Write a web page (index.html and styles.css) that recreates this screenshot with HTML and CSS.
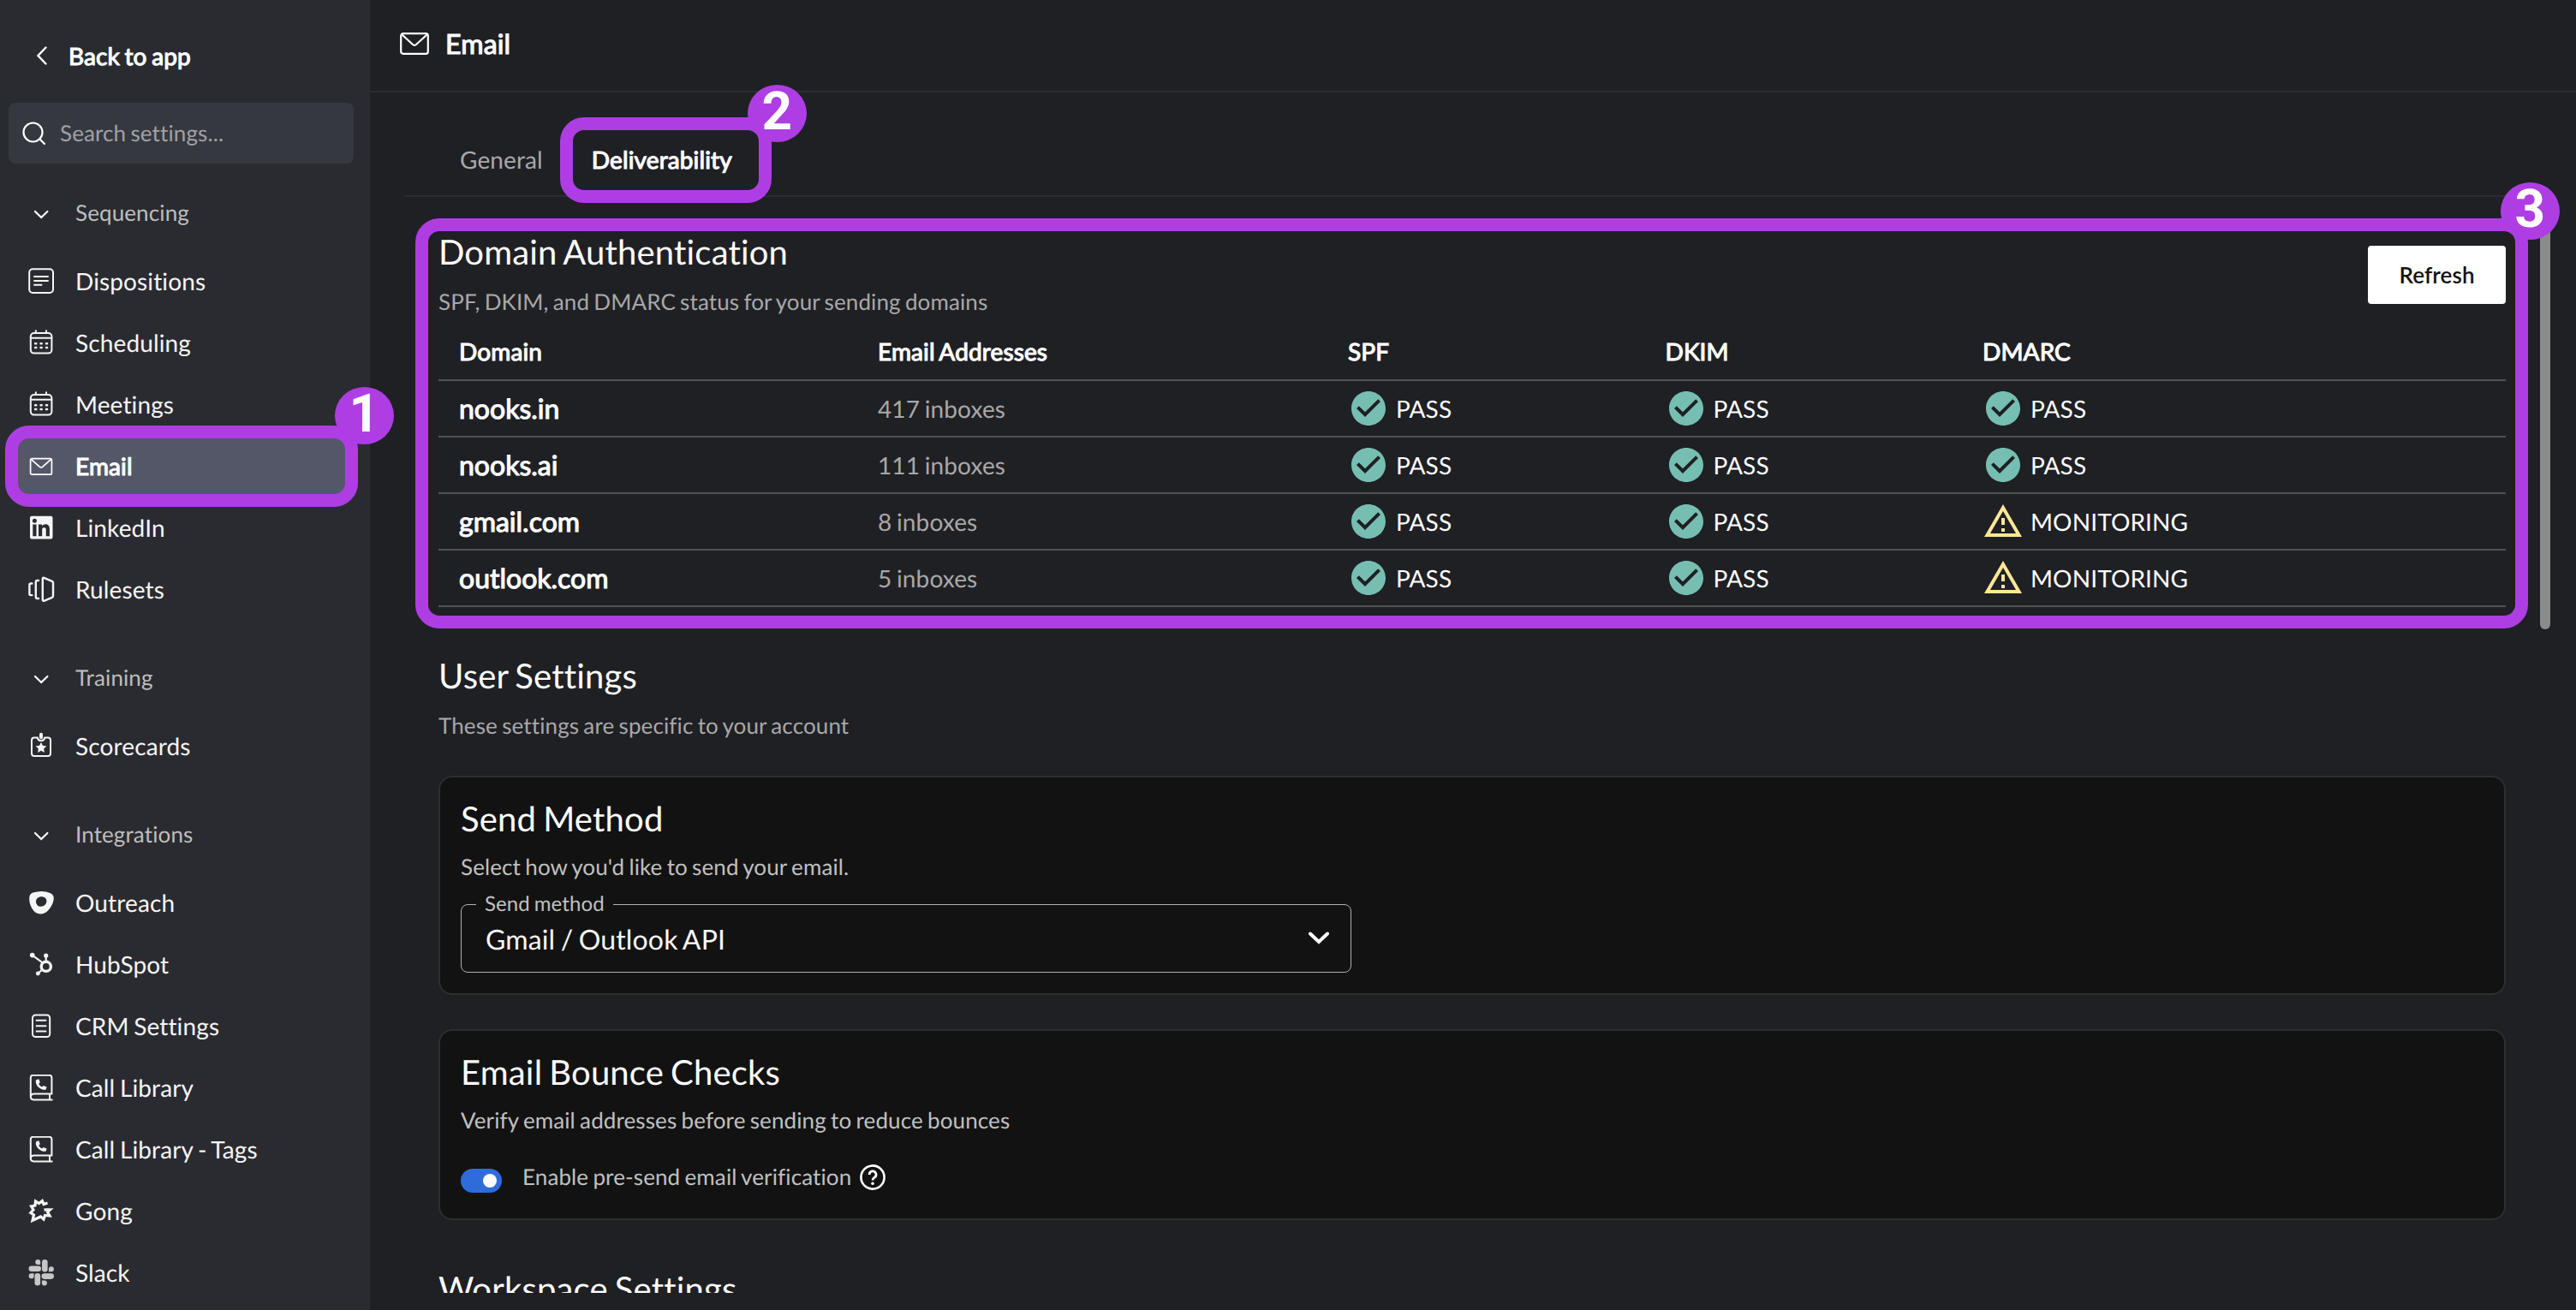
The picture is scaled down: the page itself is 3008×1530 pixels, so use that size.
FILE: index.html
```html
<!DOCTYPE html>
<html lang="en">
<head>
  <meta charset="UTF-8">
  <meta name="viewport" content="width=device-width, initial-scale=1.0">
  <title>Email - Settings</title>
  <link rel="stylesheet" href="styles.css">
</head>
<body>
  <!-- Shared icons -->
  <svg class="sprite" aria-hidden="true">
    <symbol id="chevron-down" viewBox="0 0 32 32">
      <path d="M9 14l7.2 7L23.4 14" fill="none" stroke="currentColor" stroke-width="2.2" stroke-linecap="round"/>
    </symbol>
    <symbol id="calendar" viewBox="0 0 32 32">
      <g fill="none" stroke="currentColor" stroke-width="2" stroke-linecap="round">
        <rect x="3.8" y="4" width="24.6" height="23.6" rx="4"/>
        <path d="M4 9.7h24M9.8 1.3V4M22 1.3V4"/>
        <path d="M9.2 16.3h1M15.6 16.3h1M22 16.3h1M9.2 21h1M15.6 21h1M22 21h1" stroke-width="2.6"/>
      </g>
    </symbol>
    <symbol id="mail" viewBox="0 0 32 32">
      <g fill="none" stroke="currentColor" stroke-width="1.7" stroke-linejoin="round">
        <rect x="3.6" y="6.6" width="24.8" height="18.6" rx="1.8"/>
        <path d="M4.6 7.6l9.6 8.6q1.8 1.5 3.6 0l9.6-8.6"/>
      </g>
    </symbol>
    <symbol id="call-book" viewBox="0 0 32 32">
      <g fill="none" stroke="currentColor" stroke-width="2">
        <path d="M3.8 26V3.5Q3.8.8 6.5.8h19.2q2.7 0 2.7 2.7v19H7.3q-3.5.2-3.5 3.5t3.5 3.5h22.2M26 22.5v7"/>
      </g>
      <path d="M10.2 6.2l3.1-1 1.5 4-1.6 1.5q1.1 2.7 3.8 3.8l1.6-1.6 4 1.5-1 3.1q-2 .8-4.7-.3-4.900-1.700-6.800-6.600-.7-2.700.1-4.400z" fill="currentColor"/>
    </symbol>
    <symbol id="check-circle" viewBox="0 0 24 24">
      <path fill="currentColor" d="M12 2C6.480 2 2 6.480 2 12s4.480 10 10 10 10-4.480 10-10S17.520 2 12 2zm-2 15-5-5 1.410-1.410L10 14.170l7.590-7.590L19 8l-9 9z"/>
    </symbol>
    <symbol id="warning" viewBox="0 0 24 24">
      <path fill="currentColor" d="M12 5.990L19.530 19H4.470L12 5.990M12 2L1 21h22L12 2zm1 14h-2v2h2v-2zm0-6h-2v4h2v-4z"/>
    </symbol>
  </svg>

  <div class="app">
    <aside class="sidebar">
      <a class="back" href="#">
        <svg class="back-icon" viewBox="0 0 12 22"><path d="M10.500 1.500L1.500 11l9 9.500" fill="none" stroke="currentColor" stroke-width="2.400" stroke-linecap="round"/></svg>
        <span>Back to app</span>
      </a>

      <div class="search">
        <svg class="search-icon" viewBox="0 0 28 28"><g fill="none" stroke="currentColor" stroke-width="2.200" stroke-linecap="round"><circle cx="12.500" cy="12.500" r="11"/><path d="M20.500 20.500l5.500 5.500"/></g></svg>
        <span>Search settings...</span>
      </div>

      <nav class="nav">
        <div class="nav-group">
          <div class="nav-heading"><svg class="nav-icon"><use href="#chevron-down"/></svg>Sequencing</div>
          <a class="nav-item" href="#">
            <svg class="nav-icon" viewBox="0 0 32 32"><g fill="none" stroke="currentColor" stroke-width="2" stroke-linecap="round"><rect x="2.200" y="1.200" width="27.800" height="27.800" rx="4"/><path d="M8 10h16M8 15h16M8 19.700h8.500"/></g></svg>
            Dispositions
          </a>
          <a class="nav-item" href="#"><svg class="nav-icon"><use href="#calendar"/></svg>Scheduling</a>
          <a class="nav-item" href="#"><svg class="nav-icon"><use href="#calendar"/></svg>Meetings</a>
          <a class="nav-item active" href="#">
            <svg class="nav-icon"><use href="#mail"/></svg>Email
            <span class="callout callout-nav"><b class="badge">1</b></span>
          </a>
          <a class="nav-item" href="#">
            <svg class="nav-icon" viewBox="0 0 32 32"><path fill="currentColor" fill-rule="evenodd" d="M5 1.700h22.500a2 2 0 0 1 2 2v22.800a2 2 0 0 1-2 2H5a2 2 0 0 1-2-2V3.700a2 2 0 0 1 2-2zM6.300 11.500v13.800h4.200V11.500zM8.400 4.800a2.500 2.500 0 1 0 0 5 2.500 2.500 0 0 0 0-5zM13 11.500v13.800h4.200v-7.500c0-3.600 4.500-3.900 4.500 0v7.500h4.200v-8.700c0-6.100-6.300-6.700-8.800-3.200v-1.900z"/></svg>
            LinkedIn
          </a>
          <a class="nav-item" href="#">
            <svg class="nav-icon" viewBox="0 0 32 32"><g fill="none" stroke="currentColor" stroke-width="2.400" stroke-linecap="round" stroke-linejoin="round"><path d="M5.400 8.500H3.800q-1.400 0-1.400 1.300v11q0 1.300 1.400 1.300h1.600M13 5h-1.500q-1.700 0-1.700 1.700v17.600q0 1.700 1.700 1.700H13M17.800 3q0-1.500 1.500-1.200l9.500 4q1.200.5 1.200 1.800v15.400q0 1.300-1.200 1.800l-9.500 4q-1.500.3-1.500-1.200z"/></g></svg>
            Rulesets
          </a>
        </div>

        <div class="nav-group">
          <div class="nav-heading"><svg class="nav-icon"><use href="#chevron-down"/></svg>Training</div>
          <a class="nav-item" href="#">
            <svg class="nav-icon" viewBox="0 0 32 32"><path d="M12.500 5.500H8q-3 0-3 3V24q0 3 3 3h16q3 0 3-3V8.500q0-3-3-3h-4.500" fill="none" stroke="currentColor" stroke-width="2"/><path d="M11.800 5.500q.6 3.600 4.200 3.600t4.200-3.600" fill="none" stroke="currentColor" stroke-width="2"/><rect x="14" y="-.2" width="4" height="7.500" rx="2" fill="currentColor"/><path d="M16 10.700l1.900 4.100 4.500.6-3.300 3 .9 4.500-4-2.200-4 2.200.9-4.500-3.300-3 4.500-.6z" fill="currentColor"/></svg>
            Scorecards
          </a>
        </div>

        <div class="nav-group">
          <div class="nav-heading"><svg class="nav-icon"><use href="#chevron-down"/></svg>Integrations</div>
          <a class="nav-item" href="#">
            <svg class="nav-icon" viewBox="0 0 32 32"><path fill="currentColor" fill-rule="evenodd" d="M14 2.200q7-.5 12.500 1.800 5 2 4.200 7.500-1 6.500-6 12.300-4 4.800-9.500 4.800-6 0-9.800-6.500Q2 16.500 2.200 9.800 2.400 5 6.500 3.500 10 2.400 14 2.200zM16.500 8.300c-3.800 0-6.500 2.400-6.500 5.600s2.500 5.900 5.800 5.900 6.600-2.600 6.600-6.200c0-3.200-2.600-5.300-5.900-5.300z"/></svg>
            Outreach
          </a>
          <a class="nav-item" href="#">
            <svg class="nav-icon" viewBox="0 0 32 32"><g fill="none" stroke="currentColor"><circle cx="21.800" cy="17.800" r="5.600" stroke-width="3.400"/><path d="M5.700 4.600L18 13.700M21.700 5v7M12.300 26l5-4.500" stroke-width="2.200"/></g><g fill="currentColor"><circle cx="5.700" cy="4.600" r="2.800"/><circle cx="21.700" cy="5.100" r="2.600"/><circle cx="12.300" cy="26" r="2.400"/></g></svg>
            HubSpot
          </a>
          <a class="nav-item" href="#">
            <svg class="nav-icon" viewBox="0 0 32 32"><g fill="none" stroke="currentColor" stroke-width="2"><rect x="6" y="2.500" width="20.200" height="25.500" rx="3.500"/><path d="M9.800 8.800h12.500M9.800 15.200h12.500M9.800 21.500h12.500"/></g></svg>
            CRM Settings
          </a>
          <a class="nav-item" href="#"><svg class="nav-icon"><use href="#call-book"/></svg>Call Library</a>
          <a class="nav-item" href="#"><svg class="nav-icon"><use href="#call-book"/></svg>Call Library - Tags</a>
          <a class="nav-item" href="#">
            <svg class="nav-icon" viewBox="0 0 32 32"><path fill="none" stroke="currentColor" stroke-width="3.200" d="M23.500 6L19 7.500 17.300 3.500 13.500 6.500 9.500 4 9 9 4.500 9.800 7 14 3.800 17.500 7.500 20 6 26.500 15.500 22 19 25 20.500 20.500 26 21 23.500 16.500 26.500 13.800H19.500"/></svg>
            Gong
          </a>
          <a class="nav-item" href="#">
            <svg class="nav-icon slack" viewBox="0 0 32 32"><g fill="currentColor"><rect x="17" y="0" width="6.600" height="14.500" rx="3.300"/><rect x="1.500" y="7.500" width="14.500" height="6.600" rx="3.300"/><rect x="8.500" y="16" width="6.600" height="14.500" rx="3.300"/><rect x="16.500" y="16.300" width="14.500" height="6.600" rx="3.300"/><path d="M15.200 6.100h-3.100a3 3 0 1 1 3.100-3zM24.900 14.200v-3.100a3 3 0 1 1 3.100 3.100zM7.600 16.300v3.100a3 3 0 1 1-3.100-3.100zM16.900 24.500H20a3 3 0 1 1-3.100 3z"/></g></svg>
            Slack
          </a>
        </div>
      </nav>
    </aside>

    <main class="main">
      <header class="header">
        <svg class="header-icon" viewBox="0 0 34 26"><g fill="none" stroke="currentColor" stroke-width="2.200" stroke-linejoin="round"><rect x="1.200" y="1.200" width="31.600" height="23.600" rx="2.500"/><path d="M2.500 2.500L15 14q2 1.600 4 0L31.500 2.500"/></g></svg>
        <h1>Email</h1>
      </header>

      <div class="tabs">
        <a class="tab" href="#">General</a>
        <a class="tab selected" href="#">Deliverability<span class="callout callout-tab"><b class="badge">2</b></span></a>
      </div>

      <div class="content">
        <section class="domains">
          <div class="section-head">
            <div>
              <h2>Domain Authentication</h2>
              <p class="subtitle">SPF, DKIM, and DMARC status for your sending domains</p>
            </div>
            <button class="refresh">Refresh</button>
          </div>
          <table class="domain-table">
            <thead>
              <tr><th class="col-domain">Domain</th><th class="col-inboxes">Email Addresses</th><th class="col-check">SPF</th><th class="col-check">DKIM</th><th>DMARC</th></tr>
            </thead>
            <tbody>
              <tr>
                <td class="domain">nooks.in</td><td class="inboxes">417 inboxes</td>
                <td><span class="status pass"><svg><use href="#check-circle"/></svg>PASS</span></td>
                <td><span class="status pass"><svg><use href="#check-circle"/></svg>PASS</span></td>
                <td><span class="status pass"><svg><use href="#check-circle"/></svg>PASS</span></td>
              </tr>
              <tr>
                <td class="domain">nooks.ai</td><td class="inboxes">111 inboxes</td>
                <td><span class="status pass"><svg><use href="#check-circle"/></svg>PASS</span></td>
                <td><span class="status pass"><svg><use href="#check-circle"/></svg>PASS</span></td>
                <td><span class="status pass"><svg><use href="#check-circle"/></svg>PASS</span></td>
              </tr>
              <tr>
                <td class="domain">gmail.com</td><td class="inboxes">8 inboxes</td>
                <td><span class="status pass"><svg><use href="#check-circle"/></svg>PASS</span></td>
                <td><span class="status pass"><svg><use href="#check-circle"/></svg>PASS</span></td>
                <td><span class="status warn"><svg><use href="#warning"/></svg>MONITORING</span></td>
              </tr>
              <tr>
                <td class="domain">outlook.com</td><td class="inboxes">5 inboxes</td>
                <td><span class="status pass"><svg><use href="#check-circle"/></svg>PASS</span></td>
                <td><span class="status pass"><svg><use href="#check-circle"/></svg>PASS</span></td>
                <td><span class="status warn"><svg><use href="#warning"/></svg>MONITORING</span></td>
              </tr>
            </tbody>
          </table>
        </section>

        <section class="settings">
          <h2>User Settings</h2>
          <p class="subtitle">These settings are specific to your account</p>

          <div class="card">
            <h2>Send Method</h2>
            <p class="card-text">Select how you'd like to send your email.</p>
            <div class="select">
              <span class="select-label">Send method</span>
              <span>Gmail / Outlook API</span>
              <svg class="select-icon" viewBox="0 0 24 16"><path d="M2 2.500l10 9.500 10-9.500" fill="none" stroke="currentColor" stroke-width="4" stroke-linecap="round"/></svg>
            </div>
          </div>

          <div class="card">
            <h2>Email Bounce Checks</h2>
            <p class="card-text">Verify email addresses before sending to reduce bounces</p>
            <div class="toggle-row">
              <span class="toggle"></span>
              <span class="toggle-label">Enable pre-send email verification</span>
              <svg class="help" viewBox="0 0 30 30"><g fill="none" stroke="currentColor"><circle cx="15" cy="15" r="13.600" stroke-width="2.600"/><path d="M11.200 12a3.900 3.900 0 1 1 5.800 3.200Q15 16.400 15 18.500" stroke-width="2.800"/></g><circle cx="15" cy="22.300" r="1.800" fill="currentColor"/></svg>
            </div>
          </div>
        </section>

        <section class="settings">
          <h2>Workspace Settings</h2>
        </section>
      </div>

      <div class="scrollbar"></div>
      <span class="callout callout-domains"><b class="badge">3</b></span>
    </main>
  </div>
</body>
</html>
```
FILE: styles.css
```css
* {
  margin: 0;
  padding: 0;
  box-sizing: border-box;
  letter-spacing: .0045em;
  word-spacing: -.06em;
}

body {
  font-family: Lato, "Noto Sans", sans-serif;
  font-size: 28px;
  font-variant-ligatures: none;
  text-rendering: geometricPrecision;
  color: #fff;
  background: #1f2024;
  overflow: hidden;
}

a {
  color: inherit;
  text-decoration: none;
}

.sprite {
  display: none;
}

.app {
  display: flex;
  height: 1530px;
}

/* Emphasis keeps the regular letter widths and only thickens the strokes */
.back,
.nav-item.active,
h1,
.tab.selected,
.domain-table th,
.domain-table .domain {
  font-weight: 400;
  -webkit-text-stroke: 1.1px currentColor;
}

/* Sidebar */
.sidebar {
  width: 432px;
  flex-shrink: 0;
  padding: 37px 19px 0 10px;
  background: #2a2b30;
}

.back {
  display: flex;
  align-items: center;
  gap: 25px;
  height: 56px;
  padding-left: 33px;
}

.back-icon {
  width: 12px;
  height: 22px;
}

.search {
  display: flex;
  align-items: center;
  gap: 16px;
  height: 71px;
  margin: 27px 0 14px;
  padding: 0 16px 1px;
  border-radius: 8px;
  background: #363840;
  color: #a0a1a5;
  font-size: 26px;
}

.search-icon {
  width: 28px;
  height: 28px;
  margin-top: 1px;
  color: #fff;
}

.nav-group {
  margin-bottom: 23px;
}

.nav-heading,
.nav-item {
  display: flex;
  align-items: center;
  gap: 24px;
  padding: 0 0 2px 22px;
}

.nav-heading {
  height: 88px;
  font-size: 26px;
  color: #bebebe;
}

.nav-heading .nav-icon {
  color: #fff;
}

.nav-item {
  position: relative;
  height: 72px;
  color: #f5f5f5;
}

.nav-item.active {
  border-radius: 8px;
  background: #545768;
  color: #fff;
}

.nav-icon {
  width: 32px;
  height: 32px;
  margin-top: 2px;
  overflow: visible;
}

.nav-icon.slack {
  color: #c6c6c6;
}

/* Main column */
.main {
  position: relative;
  flex: 1;
}

.header {
  display: flex;
  align-items: center;
  gap: 19px;
  height: 108px;
  padding: 0 35px 4px;
  border-bottom: 2px solid #2b2c33;
}

.header-icon {
  width: 34px;
  height: 26px;
}

h1 {
  font-size: 32px;
  line-height: 40px;
}

.tabs {
  display: flex;
  gap: 57px;
  height: 122px;
  margin: 0 40px;
  padding: 36px 65px 0;
  border-bottom: 2px solid #2b2c33;
}

.tab {
  position: relative;
  display: flex;
  align-items: center;
  color: #a8a8a9;
}

.tab.selected {
  color: #fff;
}

.content {
  height: 1280px;
  padding: 40px 82px 0 80px;
  overflow: hidden;
}

.section-head {
  display: flex;
  justify-content: space-between;
  height: 99px;
}

h2 {
  font-size: 40px;
  font-weight: 400;
  line-height: 48px;
}

.subtitle,
.card-text {
  margin-top: 18px;
  font-size: 26px;
  line-height: 32px;
  color: #a8a8a9;
}

.refresh {
  width: 161px;
  height: 68px;
  margin-top: 17px;
  border: none;
  border-radius: 4px;
  background: #fff;
  color: #121212;
  font: 600 26px/32px Lato, sans-serif;
}

/* Domain table */
.domain-table {
  width: 100%;
  margin-top: 10px;
  border-collapse: separate;
  border-spacing: 0;
  table-layout: fixed;
}

.domain-table th,
.domain-table td {
  height: 66px;
  padding: 0 24px;
  border-bottom: 2px solid #515251;
  text-align: left;
  line-height: 34px;
}

.domain-table th {
  padding-bottom: 2px;
}

.col-domain {
  width: 489px;
}

.col-inboxes {
  width: 549px;
}

.col-check {
  width: 370.5px;
}

.domain-table .domain {
  font-size: 32px;
  letter-spacing: 0;
}

.domain-table .inboxes {
  color: #a8a8a9;
}

.status {
  display: flex;
  align-items: center;
  gap: 8px;
}

.status svg {
  width: 48px;
  height: 48px;
}

.pass svg {
  color: #76beb2;
}

.warn svg {
  color: #fbe795;
}

/* Settings cards */
.settings {
  margin-top: 56px;
}

.card {
  margin-top: 40px;
  padding: 24px;
  border: 2px solid #2e2e2e;
  border-radius: 16px;
  background: #121212;
}

.subtitle + .card {
  margin-top: 43px;
}

.card-text {
  margin-top: 16px;
  color: #c0c0c0;
}

.select {
  position: relative;
  display: flex;
  align-items: center;
  justify-content: space-between;
  width: 1040px;
  height: 80px;
  margin-top: 28px;
  padding: 0 25px 0 28px;
  border: 1px solid #b0b0b0;
  border-radius: 8px;
  color: #f8f8f8;
  font-size: 32px;
}

/* floating label sits over the top border */
.select-label {
  position: absolute;
  top: -16px;
  left: 17px;
  padding: 0 10px;
  background: #121212;
  color: #c0c0c0;
  font-size: 24px;
  line-height: 30px;
}

.select-icon {
  width: 24px;
  height: 16px;
  color: #fff;
}

.toggle-row {
  display: flex;
  height: 41px;
  margin-top: 34px;
}

.toggle {
  display: flex;
  justify-content: flex-end;
  width: 48px;
  height: 28px;
  margin: 7px 24px 0 0;
  padding: 6px;
  border-radius: 14px;
  background: #2f6bdb;
}

.toggle::after {
  content: "";
  width: 16px;
  height: 16px;
  border-radius: 50%;
  background: #fff;
}

.toggle-label {
  margin-right: 10px;
  color: #c0c0c0;
  font-size: 26px;
  line-height: 32px;
}

.help {
  width: 30px;
  height: 30px;
  margin-top: 2px;
}

.scrollbar {
  position: absolute;
  top: 238px;
  right: 30px;
  width: 12px;
  height: 497px;
  border-radius: 6px;
  background: #8b8b8b;
}

/* Numbered callouts */
.callout {
  position: absolute;
  border: 15px solid #ae3ee3;
  border-radius: 28px;
}

.callout-nav {
  top: -12px;
  left: -4px;
  width: 412px;
  height: 95px;
}

.callout-tab {
  top: -7px;
  left: -37px;
  width: 247px;
  height: 100px;
}

.callout-domains {
  top: 255px;
  left: 53px;
  width: 2467px;
  height: 479px;
}

.badge {
  position: absolute;
  top: -60px;
  right: -57px;
  width: 69px;
  height: 67px;
  border-radius: 50%;
  background: #ae3ee3;
  color: #fff;
  font: bold 62px/64px Roboto, Arial, sans-serif;
  text-align: center;
  -webkit-text-stroke: 0;
}

.callout-tab .badge {
  top: -53px;
  right: -56px;
}

.callout-domains .badge {
  top: -57px;
  right: -52px;
}
```
